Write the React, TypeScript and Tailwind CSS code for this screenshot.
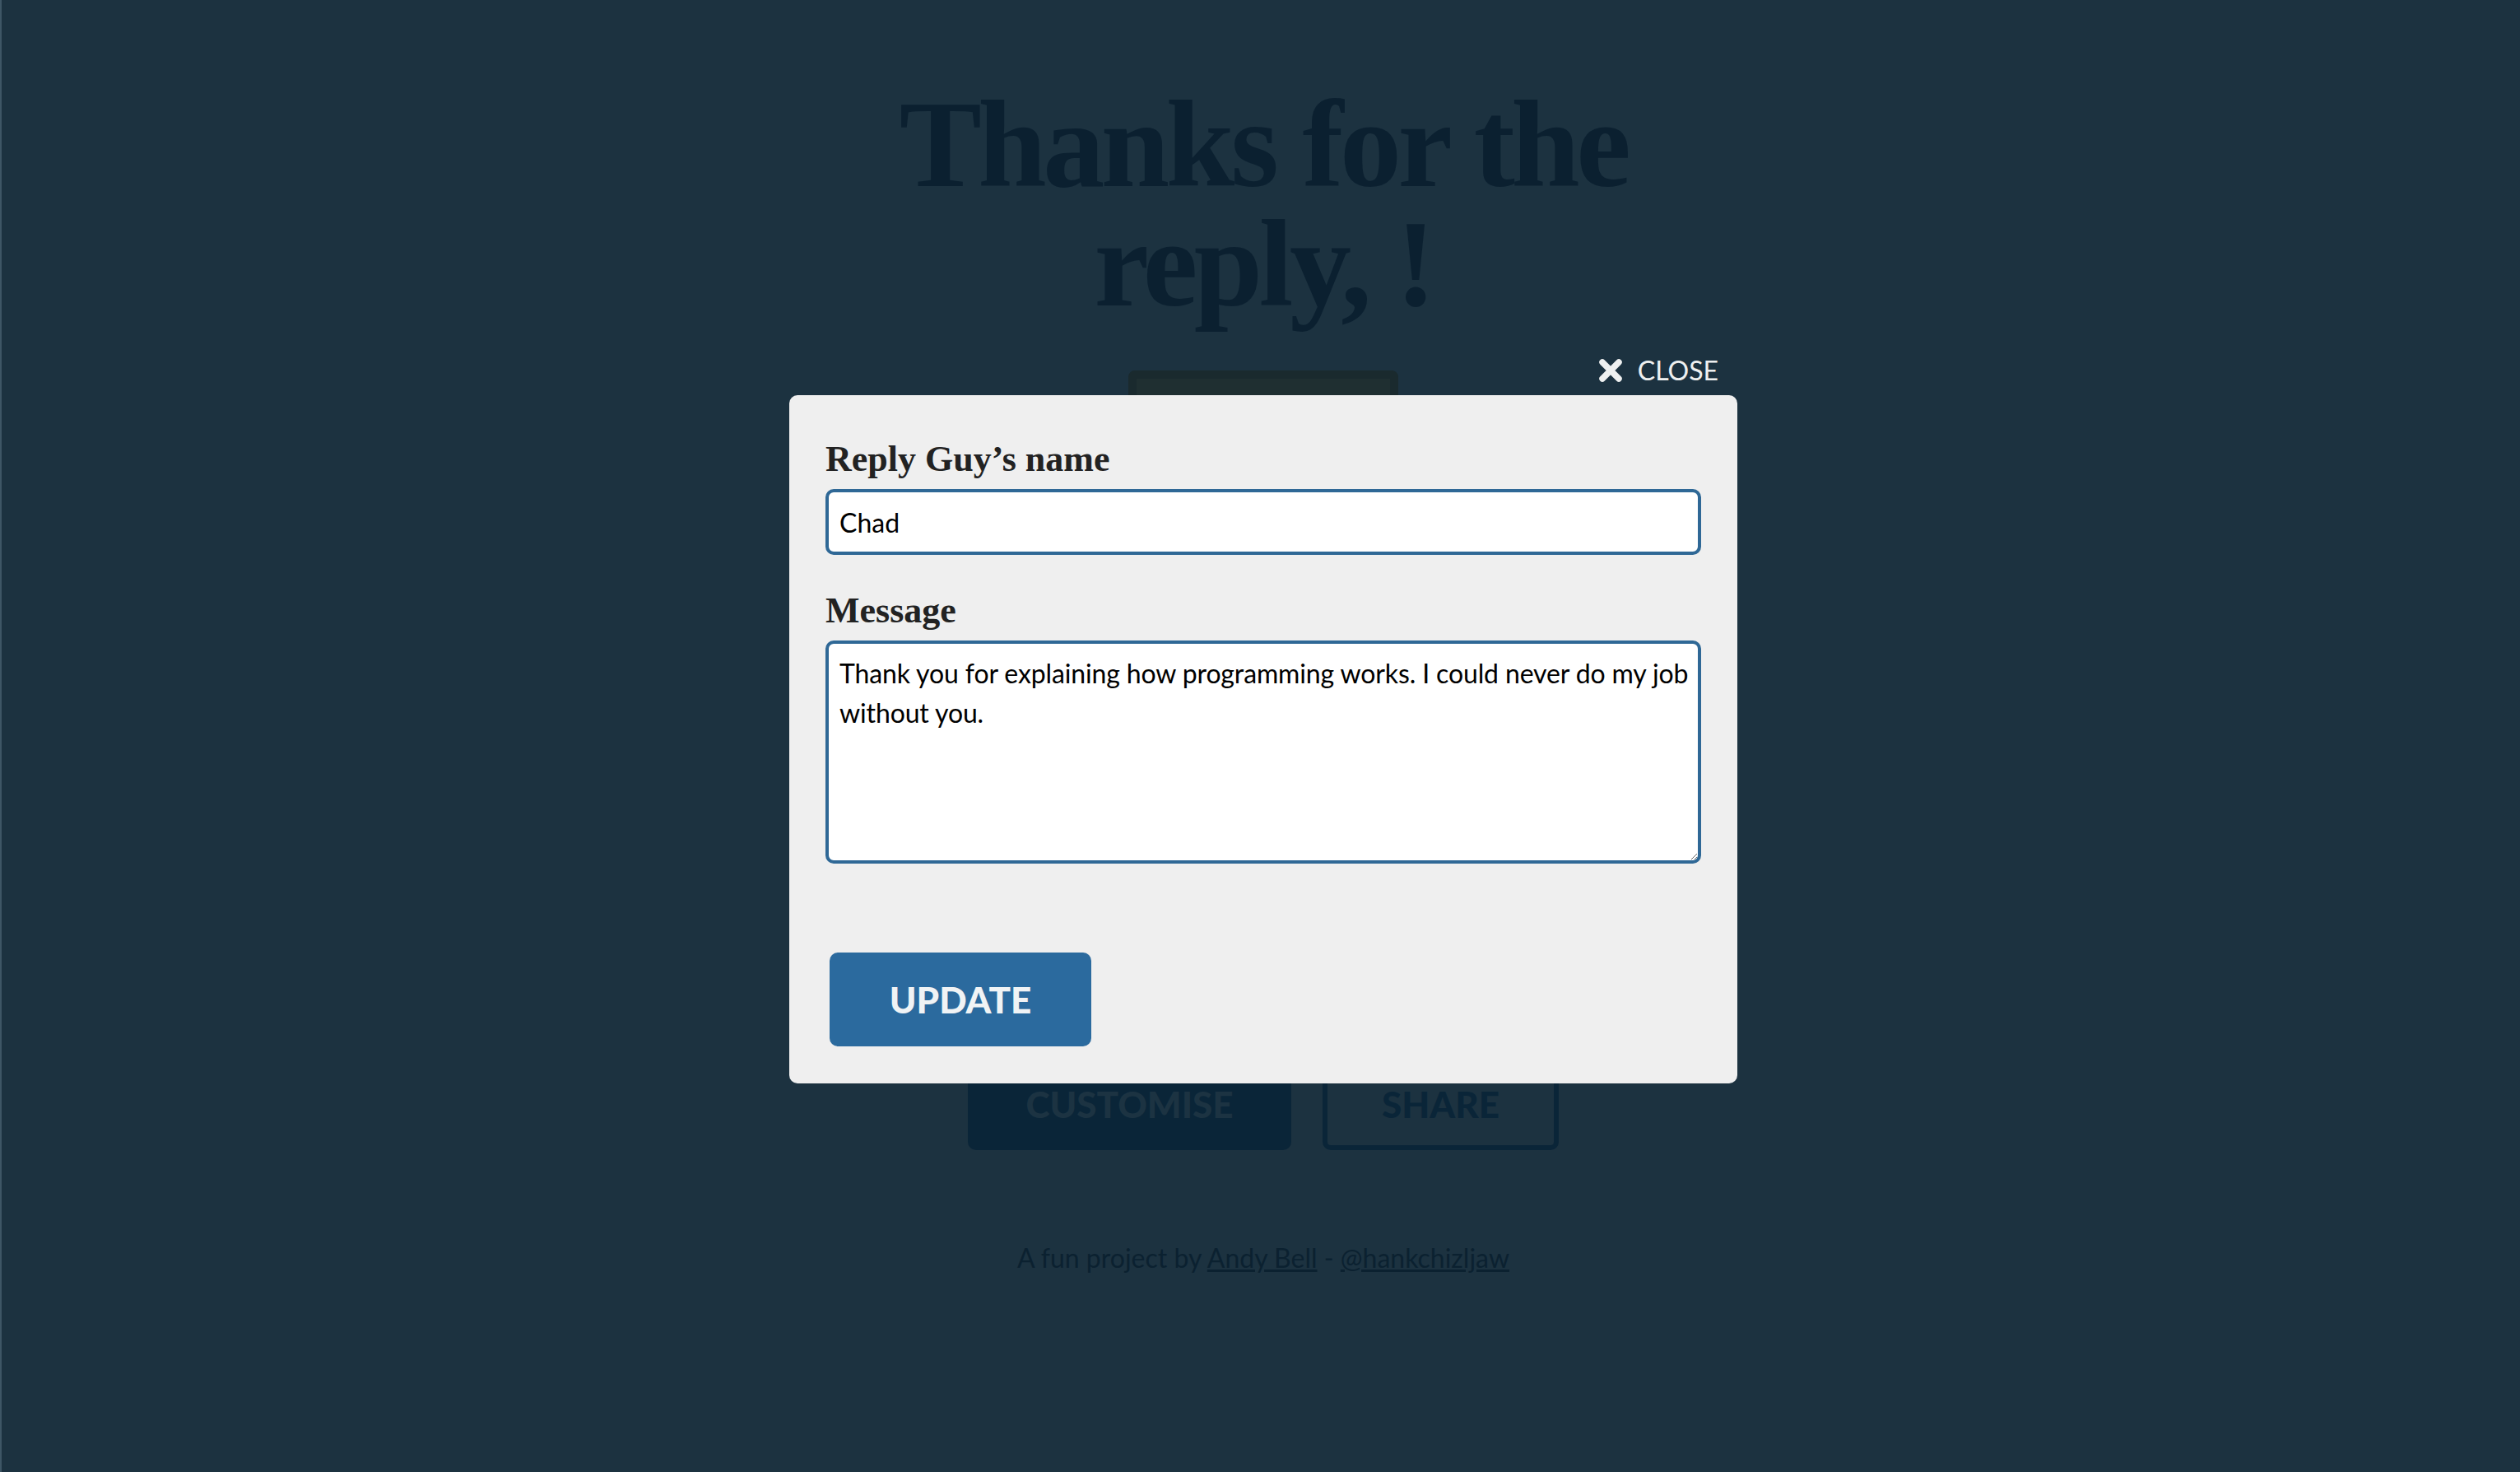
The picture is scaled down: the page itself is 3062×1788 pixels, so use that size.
import { useState } from 'react';

// Reply Guy — customise modal open over the result page

function CloseIcon() {
  return (
    <svg className="w-[30px] h-[30px]" viewBox="0 0 30 30" fill="none" stroke="currentColor">
      <path strokeWidth={7.5} strokeLinecap="round" d="M5 5L25 25M25 5L5 25" />
    </svg>
  );
}

export default function App() {
  const [name, setName] = useState('Chad');
  const [message, setMessage] = useState(
    'Thank you for explaining how programming works. I could never do my job without you.'
  );

  return (
    <div className="relative h-screen w-full overflow-hidden bg-[#1c3240] border-l-2 border-[#3e5665] font-['Lato',sans-serif]">
      {/* Page behind the overlay */}
      <main className="flex flex-col items-center pl-[6px]">
        <h1 className="mt-[103px] max-w-[1000px] text-center font-['Liberation_Serif',serif] font-bold text-[150px] leading-[145px] tracking-[-0.03em] text-[#0b2030]">
          Thanks for the reply, !
        </h1>

        <div className="mt-[57px] w-[328px] h-[760px] rounded-[8px] border-[10px] border-[#1a2a2e] bg-[#1f2f31]" />

        <div className="mt-[75px] flex gap-[38px]">
          <button className="w-[393px] h-[112px] rounded-[10px] bg-[#0a2538] text-[44px] font-black uppercase text-[#1c3342]">
            Customise
          </button>
          <button className="w-[287px] h-[112px] rounded-[10px] border-[6px] border-[#0a2538] text-[44px] font-black uppercase text-[#0a2538]">
            Share
          </button>
        </div>

        <p className="mt-[107px] text-[32px] leading-[48px] text-[#0b2130]">
          A fun project by <a className="underline">Andy Bell</a> - <a className="underline">@hankchizljaw</a>
        </p>
      </main>

      {/* Modal */}
      <div className="absolute inset-0 flex items-center justify-center pl-[6px] pt-[8px]">
        <div className="relative">
          <button className="absolute bottom-full right-[23px] mb-[11px] flex items-center gap-[18px] text-[32px] leading-[38px] uppercase text-[#eef0f0]">
            <CloseIcon />
            <span>Close</span>
          </button>

          <form
            onSubmit={(e) => e.preventDefault()}
            className="w-[1152px] rounded-[10px] bg-[#efefef] px-[44px] pt-[51px] pb-[45px]"
          >
            <label htmlFor="name" className="block mb-[10px] font-['Liberation_Serif',serif] font-bold text-[44px] leading-[53px] text-[#222222]">
              Reply Guy’s name
            </label>
            <input
              id="name"
              value={name}
              onChange={(e) => setName(e.target.value)}
              className="block w-full h-[80px] rounded-[10px] border-4 border-[#2f6896] bg-white px-[13px] text-[32px] text-black outline-none"
            />

            <label htmlFor="message" className="block mt-[41px] mb-[10px] font-['Liberation_Serif',serif] font-bold text-[44px] leading-[53px] text-[#222222]">
              Message
            </label>
            <textarea
              id="message"
              value={message}
              onChange={(e) => setMessage(e.target.value)}
              className="block w-full h-[271px] rounded-[10px] border-4 border-[#2f6896] bg-white pl-[13px] pr-[4px] pt-[12px] text-[32px] leading-[48px] tracking-[-0.004em] text-black outline-none resize-y"
            />

            <button
              type="submit"
              className="mt-[108px] ml-[5px] w-[318px] h-[114px] rounded-[10px] bg-[#2b6a9e] text-[44px] font-black uppercase text-[#f0f3f5]"
            >
              Update
            </button>
          </form>
        </div>
      </div>
    </div>
  );
}
